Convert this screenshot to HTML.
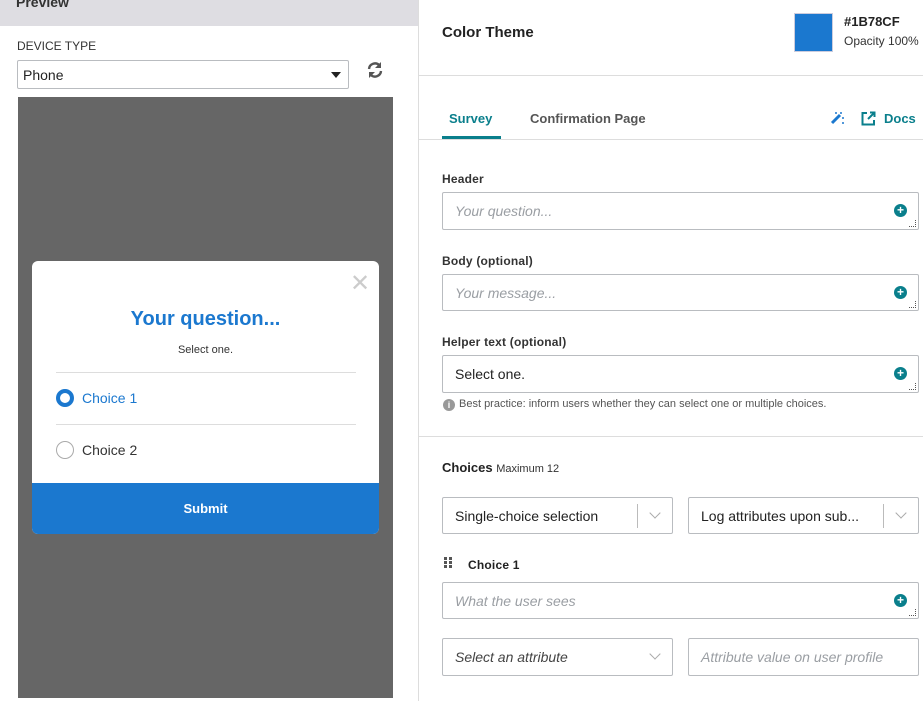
<!DOCTYPE html>
<html><head><style>
*{box-sizing:border-box;margin:0;padding:0}
body{width:923px;height:701px;overflow:hidden;background:#fff;font-family:"Liberation Sans",sans-serif;position:relative;color:#222}
.a{position:absolute}
.inp{position:absolute;border:1px solid #b9bcc0;border-radius:2px;background:#fff;font-size:14px;padding-left:12px;display:flex;align-items:center}
.ph{color:#9a9ea3;font-style:italic}
.lbl{position:absolute;font-size:12px;font-weight:bold;color:#333;letter-spacing:.2px}
.plus{position:absolute;right:11px;top:11px;width:13px;height:13px;border-radius:50%;background:#0a7f8c;color:#fff;font-size:12px;font-weight:bold;line-height:13px;text-align:center}
.rs{position:absolute;right:2px;bottom:2px;width:7px;height:7px;border-right:1px dotted #555;border-bottom:1px dotted #555}
.chev{position:absolute;width:8px;height:8px;border-right:1.5px solid #aaa;border-bottom:1.5px solid #aaa;transform:rotate(45deg)}
.sep{position:absolute;width:1px;height:24px;background:#bbb;top:6px}
.dot{position:absolute;width:3px;height:3px;background:#555}
</style></head><body>
<div class="a" style="left:0;top:0;width:418px;height:26px;background:#dedde2"></div>
<div class="a" style="left:16px;top:-6px;font-size:14px;font-weight:bold;color:#333">Preview</div>
<div class="a" style="left:418px;top:0;width:1px;height:701px;background:#ddd"></div>
<div class="a" style="left:17px;top:39px;font-size:12px;color:#333">DEVICE TYPE</div>
<div class="inp" style="left:17px;top:60px;width:332px;height:29px;color:#222;font-size:14px;padding-left:5px">Phone</div>
<div class="a" style="left:331px;top:72px;border-left:5px solid transparent;border-right:5px solid transparent;border-top:6px solid #222"></div>
<svg class="a" style="left:366px;top:61px" width="18" height="18" viewBox="0 0 18 18"><path d="M3 8a6 6 0 0 1 10.5-3.5" stroke="#555" stroke-width="2.4" fill="none"/><path d="M15 1v6h-6z" fill="#555"/><path d="M15 10a6 6 0 0 1-10.5 3.5" stroke="#555" stroke-width="2.4" fill="none"/><path d="M3 17v-6h6z" fill="#555"/></svg>
<div class="a" style="left:18px;top:97px;width:375px;height:601px;background:#666"></div>
<div class="a" style="left:32px;top:261px;width:347px;height:273px;background:#fff;border-radius:6px;overflow:hidden">
 <div class="a" style="left:318px;top:8px;font-size:24px;color:#ccc;font-weight:300">✕</div>
 <div class="a" style="left:0;width:347px;top:47px;text-align:center;font-size:20px;font-weight:bold;color:#1b78cf">Your question...</div>
 <div class="a" style="left:0;width:347px;top:83px;text-align:center;font-size:11px;color:#333">Select one.</div>
 <div class="a" style="left:24px;top:111px;width:300px;height:1px;background:#ddd"></div>
 <div class="a" style="left:24px;top:128px;width:18px;height:18px;border-radius:50%;border:4px solid #1b78cf"></div>
 <div class="a" style="left:50px;top:129px;font-size:14px;color:#1b78cf">Choice 1</div>
 <div class="a" style="left:24px;top:163px;width:300px;height:1px;background:#ddd"></div>
 <div class="a" style="left:24px;top:180px;width:18px;height:18px;border-radius:50%;border:1px solid #aaa"></div>
 <div class="a" style="left:50px;top:181px;font-size:14px;color:#333">Choice 2</div>
 <div class="a" style="left:0;top:222px;width:347px;height:51px;background:#1b78cf;color:#fff;font-weight:bold;font-size:13px;text-align:center;line-height:51px">Submit</div>
</div>
<div class="a" style="left:442px;top:24px;font-size:15px;font-weight:bold;color:#222">Color Theme</div>
<div class="a" style="left:794px;top:13px;width:39px;height:39px;background:#1b78cf;border:1px solid #ccd"></div>
<div class="a" style="left:844px;top:14px;font-size:13px;font-weight:bold;color:#222">#1B78CF</div>
<div class="a" style="left:844px;top:34px;font-size:12px;color:#333">Opacity 100%</div>
<div class="a" style="left:419px;top:75px;width:504px;height:1px;background:#ddd"></div>
<div class="a" style="left:449px;top:111px;font-size:13px;font-weight:bold;color:#0a7f8c">Survey</div>
<div class="a" style="left:442px;top:136px;width:59px;height:3px;background:#0a7f8c"></div>
<div class="a" style="left:530px;top:111px;font-size:13px;font-weight:bold;color:#555">Confirmation Page</div>
<div class="a" style="left:419px;top:139px;width:504px;height:1px;background:#ddd"></div>
<svg class="a" style="left:830px;top:111px" width="15" height="14" viewBox="0 0 15 14"><path d="M2 12L10 4" stroke="#1b78cf" stroke-width="3"/><circle cx="11" cy="2" r="1" fill="#1b78cf"/><circle cx="6" cy="2" r="1" fill="#1b78cf"/><circle cx="13" cy="7" r="1" fill="#1b78cf"/><circle cx="13" cy="12" r="1" fill="#1b78cf"/></svg>
<svg class="a" style="left:861px;top:111px" width="15" height="15" viewBox="0 0 15 15"><path d="M6 2H1.5v11.5H13V9" stroke="#0a7f8c" stroke-width="2" fill="none"/><path d="M7 8L13 2M9 1.5h4.5V6" stroke="#0a7f8c" stroke-width="2" fill="none"/></svg>
<div class="a" style="left:884px;top:111px;font-size:13px;font-weight:bold;color:#0a7f8c">Docs</div>

<div class="lbl" style="left:442px;top:172px">Header</div>
<div class="inp" style="left:442px;top:192px;width:477px;height:38px"><span class="ph">Your question...</span><div class="plus">+</div><div class="rs"></div></div>
<div class="lbl" style="left:442px;top:254px">Body (optional)</div>
<div class="inp" style="left:442px;top:274px;width:477px;height:37px"><span class="ph">Your message...</span><div class="plus">+</div><div class="rs"></div></div>
<div class="lbl" style="left:442px;top:335px">Helper text (optional)</div>
<div class="inp" style="left:442px;top:355px;width:477px;height:38px;color:#222">Select one.<div class="plus">+</div><div class="rs"></div></div>
<div class="a" style="left:443px;top:399px;width:12px;height:12px;border-radius:50%;background:#999;color:#fff;font-size:9px;font-weight:bold;text-align:center;line-height:12px">i</div>
<div class="a" style="left:459px;top:398px;font-size:11px;color:#555">Best practice: inform users whether they can select one or multiple choices.</div>
<div class="a" style="left:419px;top:436px;width:504px;height:1px;background:#ddd"></div>
<div class="a" style="left:442px;top:460px;font-size:13px;font-weight:bold;color:#222">Choices <span style="font-size:11px;font-weight:normal;color:#333">Maximum 12</span></div>
<div class="inp" style="left:442px;top:497px;width:231px;height:37px;color:#222">Single-choice selection<div class="sep" style="left:194px"></div><div class="chev" style="left:208px;top:11px"></div></div>
<div class="inp" style="left:688px;top:497px;width:231px;height:37px;color:#222">Log attributes upon sub...<div class="sep" style="left:194px"></div><div class="chev" style="left:208px;top:11px"></div></div>
<div class="dot" style="left:444px;top:557px"></div><div class="dot" style="left:449px;top:557px"></div>
<div class="dot" style="left:444px;top:561px"></div><div class="dot" style="left:449px;top:561px"></div>
<div class="dot" style="left:444px;top:565px"></div><div class="dot" style="left:449px;top:565px"></div>
<div class="lbl" style="left:468px;top:558px;color:#222">Choice 1</div>
<div class="inp" style="left:442px;top:582px;width:477px;height:37px"><span class="ph">What the user sees</span><div class="plus">+</div><div class="rs"></div></div>
<div class="inp" style="left:442px;top:638px;width:231px;height:38px;color:#444;font-style:italic">Select an attribute<div class="chev" style="left:208px;top:11px"></div></div>
<div class="inp" style="left:688px;top:638px;width:231px;height:38px"><span class="ph">Attribute value on user profile</span></div>
</body></html>
